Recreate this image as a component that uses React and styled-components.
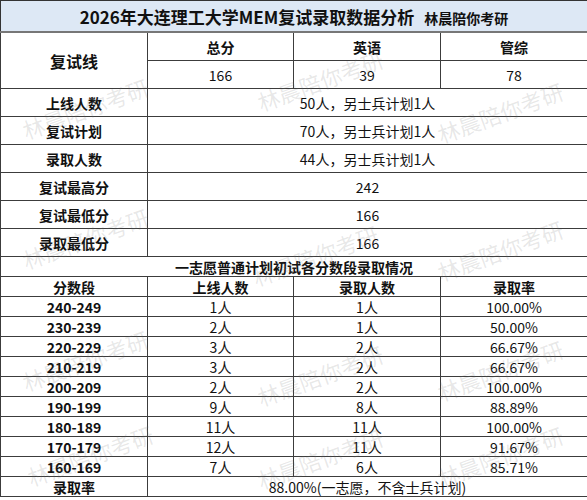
import styled, { createGlobalStyle } from "styled-components";

const GlobalStyle = createGlobalStyle`
  body {
    margin: 0;
    background: #fff;
    font-family: "Noto Sans CJK SC", "Noto Sans", sans-serif;
    color: #111;
  }
`;

const Sheet = styled.div`
  position: relative;
  width: 587px;
  height: 500px;
  overflow: hidden;
`;

const Table = styled.table`
  width: 587px;
  border-collapse: collapse;
  table-layout: fixed;
`;

const Title = styled.td`
  height: 30px;
  padding: 0;
  background: #dde8f5;
  border: 1px solid #333;
  border-bottom: 2px solid #777;
  text-align: center;
  font-size: 17px;
  font-weight: 700;
  line-height: 1;
  white-space: nowrap;

  small {
    font-size: 14px;
    margin-left: 10px;
  }
`;

const Cell = styled.td`
  height: ${(p) => p.$h || 27}px;
  padding: 0;
  border: 1px solid #3c3c3c;
  text-align: center;
  vertical-align: middle;
  font-size: ${(p) => p.$size || 14}px;
  font-weight: ${(p) => (p.$bold ? 700 : 400)};
  line-height: 1;
  white-space: nowrap;
`;

const Mark = styled.span`
  position: absolute;
  left: ${(p) => p.$x}px;
  top: ${(p) => p.$y}px;
  transform: translate(-50%, -50%) rotate(-20deg);
  font-size: 22px;
  color: rgba(110, 110, 110, 0.16);
  white-space: nowrap;
  pointer-events: none;
`;

const scores = [
  ["240-249", "1人", "1人", "100.00%"],
  ["230-239", "2人", "1人", "50.00%"],
  ["220-229", "3人", "2人", "66.67%"],
  ["210-219", "3人", "2人", "66.67%"],
  ["200-209", "2人", "2人", "100.00%"],
  ["190-199", "9人", "8人", "88.89%"],
  ["180-189", "11人", "11人", "100.00%"],
  ["170-179", "12人", "11人", "91.67%"],
  ["160-169", "7人", "6人", "85.71%"],
];

const stats = [
  ["上线人数", "50人，另士兵计划1人"],
  ["复试计划", "70人，另士兵计划1人"],
  ["录取人数", "44人，另士兵计划1人"],
  ["复试最高分", "242"],
  ["复试最低分", "166"],
  ["录取最低分", "166"],
];

const marks = [
  [85, 108], [320, 80], [500, 112],
  [85, 238], [315, 255], [500, 250],
  [85, 360], [320, 375], [500, 370],
  [90, 455], [320, 458], [500, 456],
];

export default function App() {
  return (
    <>
      <GlobalStyle />
      <Sheet>
        <Table>
          <colgroup>
            <col style={{ width: 147 }} />
            <col style={{ width: 146 }} />
            <col style={{ width: 147 }} />
            <col style={{ width: 147 }} />
          </colgroup>
          <tbody>
            <tr>
              <Title colSpan={4}>
                2026年大连理工大学MEM复试录取数据分析<small>林晨陪你考研</small>
              </Title>
            </tr>
            <tr>
              <Cell rowSpan={2} $bold $size={16}>复试线</Cell>
              <Cell $bold>总分</Cell>
              <Cell $bold>英语</Cell>
              <Cell $bold>管综</Cell>
            </tr>
            <tr>
              <Cell>166</Cell>
              <Cell>39</Cell>
              <Cell>78</Cell>
            </tr>
            {stats.map(([label, value]) => (
              <tr key={label}>
                <Cell $bold>{label}</Cell>
                <Cell colSpan={3}>{value}</Cell>
              </tr>
            ))}
            <tr>
              <Cell colSpan={4} $bold $h={19}>一志愿普通计划初试各分数段录取情况</Cell>
            </tr>
            <tr>
              <Cell $bold $h={19}>分数段</Cell>
              <Cell $bold $h={19}>上线人数</Cell>
              <Cell $bold $h={19}>录取人数</Cell>
              <Cell $bold $h={19}>录取率</Cell>
            </tr>
            {scores.map(([band, line, admit, rate]) => (
              <tr key={band}>
                <Cell $bold $h={19}>{band}</Cell>
                <Cell $h={19}>{line}</Cell>
                <Cell $h={19}>{admit}</Cell>
                <Cell $h={19}>{rate}</Cell>
              </tr>
            ))}
            <tr>
              <Cell $bold $h={19}>录取率</Cell>
              <Cell colSpan={3} $h={19}>88.00%(一志愿，不含士兵计划)</Cell>
            </tr>
          </tbody>
        </Table>
        {marks.map(([x, y]) => (
          <Mark key={`${x}-${y}`} $x={x} $y={y}>林晨陪你考研</Mark>
        ))}
      </Sheet>
    </>
  );
}
